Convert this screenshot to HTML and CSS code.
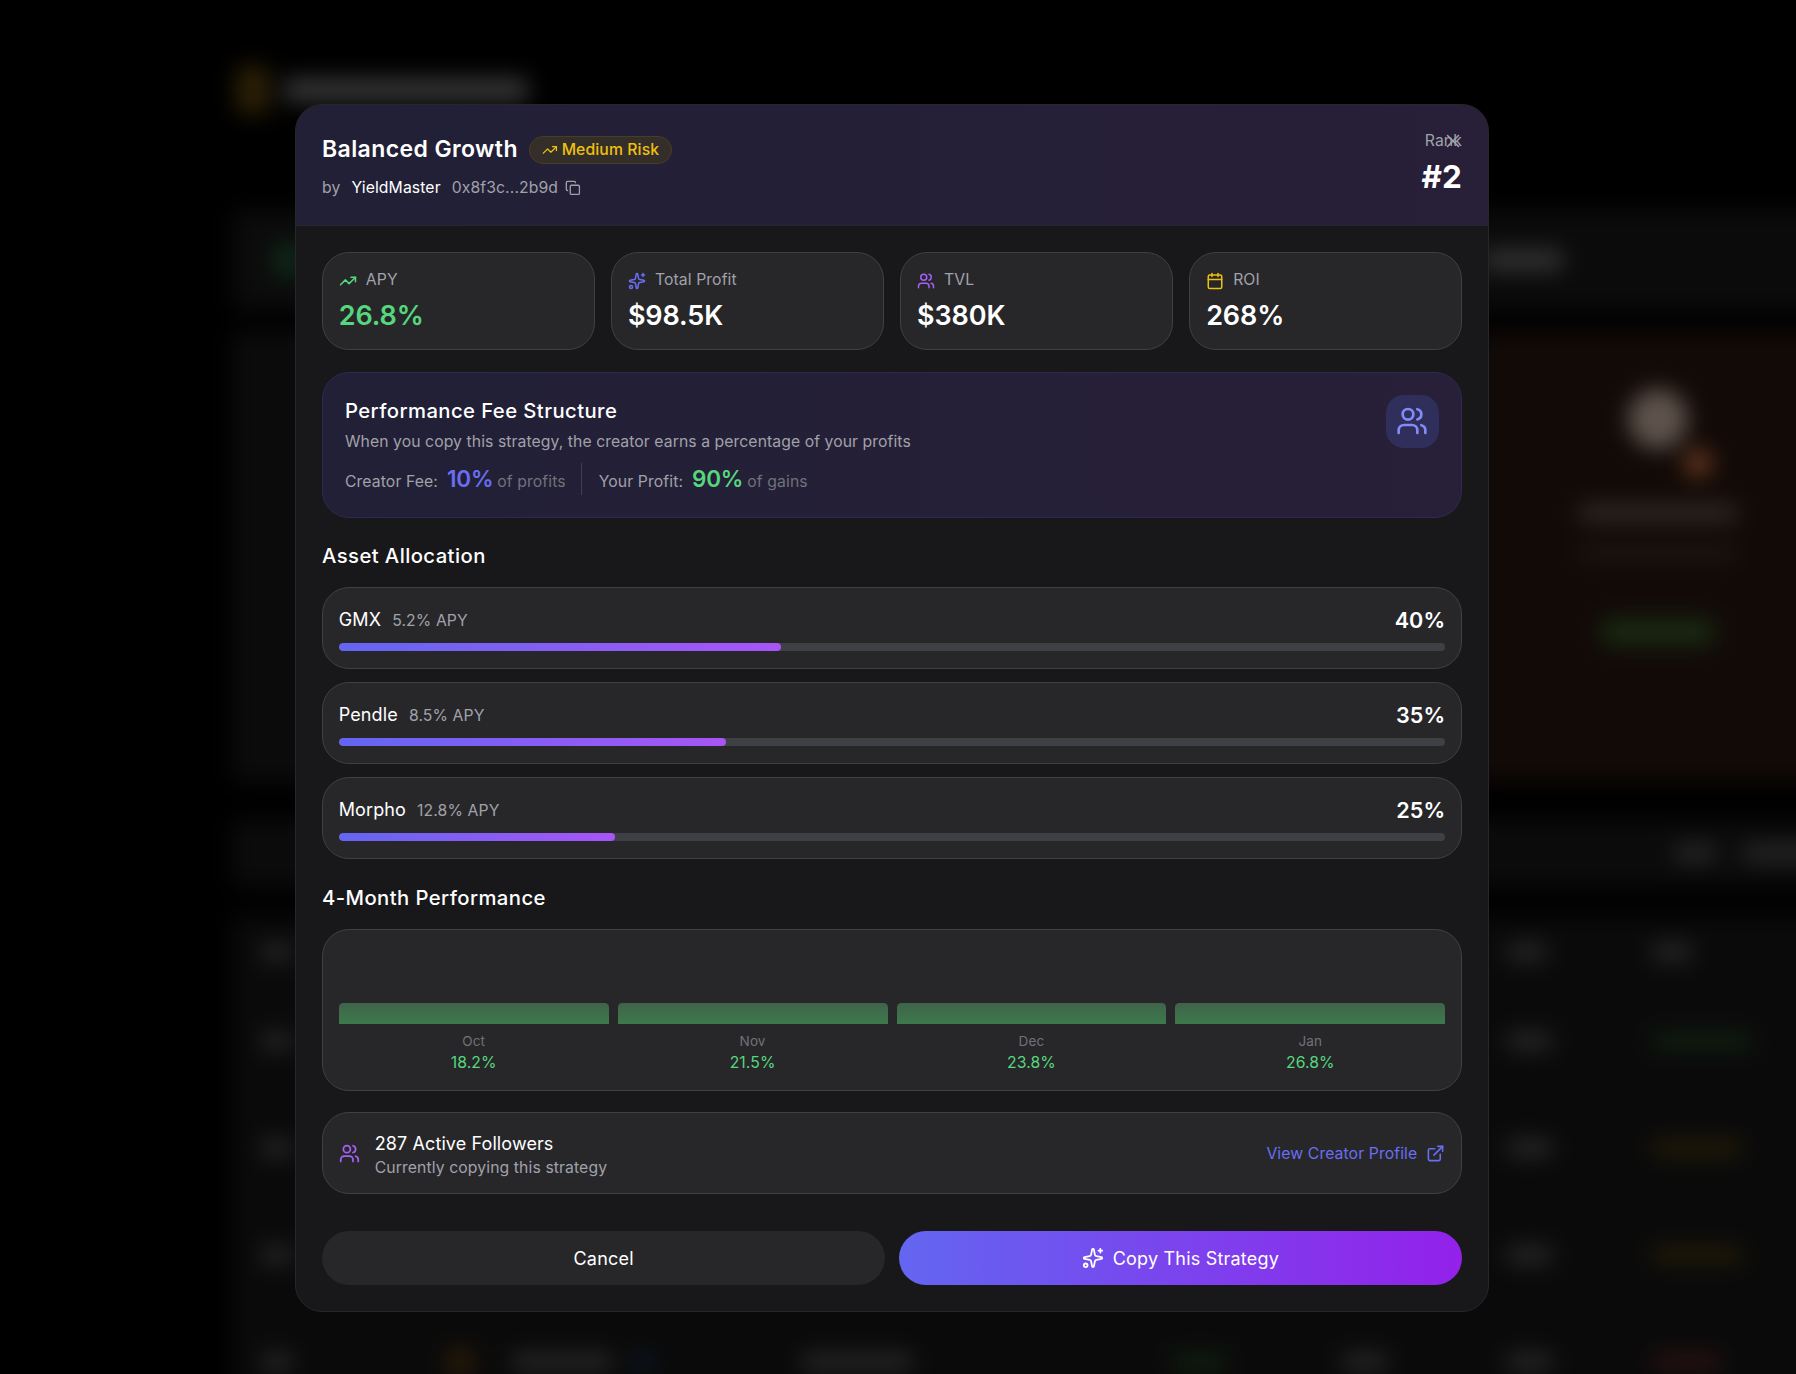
FILE: index.html
```html
<!DOCTYPE html>
<html lang="en">
    <head>
        <meta charset="UTF-8" />
        <meta name="viewport" content="width=device-width, initial-scale=1.0" />
        <title>Balanced Growth</title>
        <link rel="stylesheet" href="styles.css">
    </head>

    <body>
        <!-- icon sprite -->
        <svg class="sprite" aria-hidden="true">
            <symbol id="i-trend" viewBox="0 0 24 24"><path d="M22 7l-8.5 8.5-5-5L2 17"/><path d="M16 7h6v6"/></symbol>
            <symbol id="i-spark" viewBox="0 0 24 24"><path d="M11.017 2.814a1 1 0 0 1 1.966 0l1.051 5.558a2 2 0 0 0 1.594 1.594l5.558 1.051a1 1 0 0 1 0 1.966l-5.558 1.051a2 2 0 0 0-1.594 1.594l-1.051 5.558a1 1 0 0 1-1.966 0l-1.051-5.558a2 2 0 0 0-1.594-1.594l-5.558-1.051a1 1 0 0 1 0-1.966l5.558-1.051a2 2 0 0 0 1.594-1.594z"/><path d="M20 2v4"/><path d="M22 4h-4"/><circle cx="4" cy="20" r="2"/></symbol>
            <symbol id="i-users" viewBox="0 0 24 24"><path d="M16 21v-2a4 4 0 0 0-4-4H6a4 4 0 0 0-4 4v2"/><circle cx="9" cy="7" r="4"/><path d="M22 21v-2a4 4 0 0 0-3-3.87"/><path d="M16 3.13a4 4 0 0 1 0 7.75"/></symbol>
            <symbol id="i-calendar" viewBox="0 0 24 24"><path d="M8 2v4"/><path d="M16 2v4"/><rect x="3" y="4" width="18" height="18" rx="2"/><path d="M3 10h18"/></symbol>
            <symbol id="i-copy" viewBox="0 0 24 24"><rect x="8" y="8" width="14" height="14" rx="2"/><path d="M4 16c-1.1 0-2-.9-2-2V4c0-1.1.9-2 2-2h10c1.1 0 2 .9 2 2"/></symbol>
            <symbol id="i-link" viewBox="0 0 24 24"><path d="M15 3h6v6"/><path d="M10 14 21 3"/><path d="M18 13v6a2 2 0 0 1-2 2H5a2 2 0 0 1-2-2V8a2 2 0 0 1 2-2h6"/></symbol>
            <symbol id="i-x" viewBox="0 0 24 24"><path d="M18 6 6 18"/><path d="m6 6 12 12"/></symbol>
        </svg>

        <!-- page behind the dialog, only ever seen blurred -->
        <div class="backdrop" aria-hidden="true">
            <div class="page">
                <div class="page__head">
                    <span class="page__logo"></span>
                    <span class="blob blob--title"></span>
                </div>
                <div class="page__band">
                    <span class="blob blob--glow"></span>
                    <span class="blob blob--bandtext"></span>
                </div>
                <div class="podium">
                    <div class="podium__card"></div>
                    <div class="podium__card"></div>
                    <div class="podium__card podium__card--third">
                        <span class="podium__avatar"></span>
                        <span class="podium__medal"></span>
                        <span class="blob blob--name"></span>
                        <span class="blob blob--sub"></span>
                        <span class="blob blob--gain"></span>
                    </div>
                </div>
                <div class="filters">
                    <span class="blob blob--w40"></span>
                    <span class="blob blob--w90"></span>
                </div>
                <div class="trow trow--head">
                    <span class="blob blob--w30"></span><i></i><i></i><i></i><i></i><i></i><i></i>
                    <span class="blob blob--w40"></span><span class="blob blob--w40"></span>
                </div>
                <div class="trow">
                    <span class="blob blob--w30"></span><i></i><i></i><i></i><i></i><i></i><i></i>
                    <span class="blob blob--w45"></span><span class="blob blob--green"></span>
                </div>
                <div class="trow">
                    <span class="blob blob--w30"></span><i></i><i></i><i></i><i></i><i></i><i></i>
                    <span class="blob blob--w45"></span><span class="blob blob--yellow"></span>
                </div>
                <div class="trow">
                    <span class="blob blob--w30"></span><i></i><i></i><i></i><i></i><i></i><i></i>
                    <span class="blob blob--w45"></span><span class="blob blob--yellow"></span>
                </div>
                <div class="trow">
                    <span class="blob blob--w30"></span>
                    <span class="blob blob--orange"></span>
                    <span class="blob blob--w100"></span>
                    <span class="blob blob--blue"></span>
                    <span class="blob blob--w110"></span>
                    <span class="blob blob--green-short"></span>
                    <span class="blob blob--w45"></span>
                    <span class="blob blob--w45"></span>
                    <span class="blob blob--red"></span>
                </div>
            </div>
        </div>

        <div class="overlay">
            <div class="modal">
                <button class="modal__close" aria-label="Close"><svg class="icon"><use href="#i-x"/></svg></button>

                <header class="modal__head">
                    <div>
                        <div class="modal__title-row">
                            <h2 class="modal__title">Balanced Growth</h2>
                            <span class="risk"><svg class="icon"><use href="#i-trend"/></svg>Medium Risk</span>
                        </div>
                        <div class="modal__meta">
                            <span>by</span>
                            <span class="modal__creator">YieldMaster</span>
                            <span class="modal__addr">0x8f3c...2b9d</span>
                            <svg class="icon icon--copy"><use href="#i-copy"/></svg>
                        </div>
                    </div>
                    <div class="rank">
                        <div class="rank__label">Rank</div>
                        <div class="rank__value">#2</div>
                    </div>
                </header>

                <div class="modal__body">
                    <div class="stats">
                        <div class="card stat">
                            <div class="stat__label"><svg class="icon green"><use href="#i-trend"/></svg>APY</div>
                            <div class="stat__value green">26.8%</div>
                        </div>
                        <div class="card stat">
                            <div class="stat__label"><svg class="icon indigo"><use href="#i-spark"/></svg>Total Profit</div>
                            <div class="stat__value">$98.5K</div>
                        </div>
                        <div class="card stat">
                            <div class="stat__label"><svg class="icon purple"><use href="#i-users"/></svg>TVL</div>
                            <div class="stat__value">$380K</div>
                        </div>
                        <div class="card stat">
                            <div class="stat__label"><svg class="icon yellow"><use href="#i-calendar"/></svg>ROI</div>
                            <div class="stat__value">268%</div>
                        </div>
                    </div>

                    <div class="fee">
                        <div>
                            <h3 class="fee__title">Performance Fee Structure</h3>
                            <p class="fee__text">When you copy this strategy, the creator earns a percentage of your profits</p>
                            <div class="fee__split">
                                <div class="fee__part">
                                    <span>Creator Fee:</span>
                                    <strong class="indigo">10%</strong>
                                    <span class="fee__muted">of profits</span>
                                </div>
                                <div class="fee__part fee__part--second">
                                    <span>Your Profit:</span>
                                    <strong class="green">90%</strong>
                                    <span class="fee__muted">of gains</span>
                                </div>
                            </div>
                        </div>
                        <div class="fee__icon"><svg class="icon"><use href="#i-users"/></svg></div>
                    </div>

                    <h3 class="section-title">Asset Allocation</h3>
                    <div class="alloc-list">
                        <div class="card alloc">
                            <div class="alloc__row">
                                <div class="alloc__name">GMX <span class="alloc__apy">5.2% APY</span></div>
                                <div class="alloc__pct">40%</div>
                            </div>
                            <div class="track"><div class="track__fill" style="width: 40%"></div></div>
                        </div>
                        <div class="card alloc">
                            <div class="alloc__row">
                                <div class="alloc__name">Pendle <span class="alloc__apy">8.5% APY</span></div>
                                <div class="alloc__pct">35%</div>
                            </div>
                            <div class="track"><div class="track__fill" style="width: 35%"></div></div>
                        </div>
                        <div class="card alloc">
                            <div class="alloc__row">
                                <div class="alloc__name">Morpho <span class="alloc__apy">12.8% APY</span></div>
                                <div class="alloc__pct">25%</div>
                            </div>
                            <div class="track"><div class="track__fill" style="width: 25%"></div></div>
                        </div>
                    </div>

                    <h3 class="section-title section-title--perf">4-Month Performance</h3>
                    <div class="card chart">
                        <div class="chart__col">
                            <div class="chart__plot"><div class="chart__bar"></div></div>
                            <div class="chart__month">Oct</div>
                            <div class="chart__value">18.2%</div>
                        </div>
                        <div class="chart__col">
                            <div class="chart__plot"><div class="chart__bar"></div></div>
                            <div class="chart__month">Nov</div>
                            <div class="chart__value">21.5%</div>
                        </div>
                        <div class="chart__col">
                            <div class="chart__plot"><div class="chart__bar"></div></div>
                            <div class="chart__month">Dec</div>
                            <div class="chart__value">23.8%</div>
                        </div>
                        <div class="chart__col">
                            <div class="chart__plot"><div class="chart__bar"></div></div>
                            <div class="chart__month">Jan</div>
                            <div class="chart__value">26.8%</div>
                        </div>
                    </div>

                    <div class="card followers">
                        <div class="followers__left">
                            <svg class="icon icon--followers purple"><use href="#i-users"/></svg>
                            <div class="followers__text">
                                <div class="followers__count">287 Active Followers</div>
                                <div class="followers__sub">Currently copying this strategy</div>
                            </div>
                        </div>
                        <a class="followers__link" href="#">View Creator Profile <svg class="icon"><use href="#i-link"/></svg></a>
                    </div>

                    <div class="actions">
                        <button class="btn btn--ghost">Cancel</button>
                        <button class="btn btn--primary"><svg class="icon"><use href="#i-spark"/></svg>Copy This Strategy</button>
                    </div>
                </div>
            </div>
        </div>
    </body>
</html>
```

FILE: styles.css
```css
html {
    box-sizing: border-box;
    font-size: 18px;
}

*,
*:before,
*:after {
    box-sizing: inherit;
}

body,
h2,
h3,
p {
    margin: 0;
    padding: 0;
    font-weight: normal;
}

body {
    position: relative;
    height: 1374px;
    overflow: hidden;
    background: #000;
    color: #fff;
    font-family: Inter, "Liberation Sans", sans-serif;
    letter-spacing: 0.1px;
}

button {
    font-family: inherit;
    letter-spacing: inherit;
    border: 0;
    cursor: pointer;
}

.sprite {
    display: none;
}

.icon {
    width: 1rem;
    height: 1rem;
    flex: none;
    fill: none;
    stroke: currentColor;
    stroke-width: 2;
    stroke-linecap: round;
    stroke-linejoin: round;
}

.green {
    color: #56d67d;
}

.indigo {
    color: #6a6ef2;
}

.purple {
    color: #a660f5;
}

.yellow {
    color: #eec010;
}

/* Blurred page behind the dialog */
.backdrop {
    position: absolute;
    inset: 0;
    overflow: hidden;
}

.page {
    width: 1700px;
    margin-left: 232px;
    filter: blur(11px);
}

.page__head {
    display: flex;
    align-items: center;
    gap: 14px;
    height: 210px;
    padding: 0 0 30px 4px;
}

.page__logo {
    width: 34px;
    height: 48px;
    border-radius: 6px;
    background: #2c2006;
}

.page__band {
    display: flex;
    justify-content: space-between;
    align-items: center;
    height: 100px;
    padding: 0 369px 0 30px;
    background: #0b0b0b;
}

.podium {
    display: grid;
    grid-template-columns: 620px 620px 1fr;
    gap: 16px;
    height: 450px;
    margin-top: 22px;
}

.podium__card {
    background: #0b0b0b;
}

.podium__card--third {
    display: flex;
    flex-direction: column;
    align-items: center;
    padding-right: 100px;
    margin-left: -20px;
    background: #120a07;
}

.podium__avatar {
    width: 60px;
    height: 60px;
    margin-top: 57px;
    border-radius: 50%;
    background: #5e534c;
}

.podium__medal {
    width: 28px;
    height: 28px;
    margin: 0 0 0 80px;
    border-radius: 50%;
    background: #663820;
}

.filters {
    display: flex;
    justify-content: flex-end;
    align-items: center;
    gap: 27px;
    height: 66px;
    margin-top: 38px;
    padding-right: 100px;
    background: #0b0b0b;
}

.trow {
    display: grid;
    grid-template-columns: 185px 65px 122px 168px 370px 170px 165px 145px 100px;
    align-items: center;
    justify-items: start;
    height: 107px;
    padding-left: 30px;
    background: #0a0a0a;
}

.trow--head {
    height: 71px;
    margin-top: 30px;
}

.blob {
    display: block;
    height: 16px;
    border-radius: 4px;
    background: #2a2a2a;
}

.blob--title {
    width: 244px;
    height: 24px;
    background: #363636;
}

.blob--glow {
    width: 34px;
    height: 34px;
    margin-left: 10px;
    background: #0f2618;
}

.blob--bandtext {
    width: 80px;
    height: 20px;
    background: #343434;
}

.blob--name {
    width: 158px;
    height: 16px;
    margin-top: 28px;
    background: #332b28;
}

.blob--sub {
    width: 158px;
    height: 12px;
    margin-top: 26px;
    background: #1e1815;
}

.blob--gain {
    width: 112px;
    height: 26px;
    margin-top: 60px;
    background: #182a12;
}

.blob--w30 {
    width: 30px;
}

.blob--w40 {
    width: 40px;
}

.blob--w45 {
    width: 45px;
}

.blob--w90 {
    width: 90px;
}

.blob--w100 {
    width: 100px;
}

.blob--w110 {
    width: 110px;
}

.blob--green {
    width: 100px;
    background: #112011;
}

.blob--green-short {
    width: 55px;
    background: #112011;
}

.blob--yellow {
    width: 90px;
    background: #241c07;
}

.blob--red {
    width: 70px;
    background: #2c1212;
}

.blob--orange {
    width: 26px;
    height: 26px;
    background: #2c1c08;
}

.blob--blue {
    width: 16px;
    height: 16px;
    background: #0e1c34;
}

/* Dialog */
.overlay {
    position: absolute;
    inset: 0;
    display: flex;
    justify-content: center;
    align-items: flex-start;
    padding: 104px 12px 0 0;
}

.modal {
    position: relative;
    width: 1194px;
    border: 1px solid #27272a;
    border-radius: 1.5rem;
    background: #18181b;
    overflow: hidden;
}

.modal__close {
    position: absolute;
    top: 25px;
    right: 24px;
    display: flex;
    padding: 0;
    background: none;
    color: #a1a1aa;
}

.modal__close .icon {
    width: 22px;
    height: 22px;
    stroke-width: 1.7;
}

.modal__head {
    display: flex;
    justify-content: space-between;
    height: 121px;
    padding: 29px 26px 0;
    border-bottom: 1px solid #27272a;
    background: linear-gradient(90deg, #212036, #281f38);
}

.modal__title-row {
    display: flex;
    align-items: center;
    gap: 11px;
}

.modal__title {
    font-size: 23px;
    line-height: 1.75rem;
    font-weight: 600;
    letter-spacing: 0.4px;
}

.risk {
    display: flex;
    align-items: center;
    gap: 4px;
    height: 28px;
    padding: 0 12px;
    border: 1px solid #4c3d20;
    border-radius: 999px;
    background: #342e2b;
    color: #eec010;
    font-size: 0.875rem;
    font-weight: 450;
}

.risk .icon {
    width: 0.875rem;
    height: 0.875rem;
}

.modal__meta {
    display: flex;
    align-items: center;
    gap: 11px;
    margin-top: 11px;
    color: #a1a1aa;
    font-size: 0.875rem;
    line-height: 1.25rem;
}

.modal__creator {
    color: #fff;
    font-weight: 420;
}

.modal__addr {
    margin-right: -4px;
}

.icon--copy {
    width: 0.875rem;
    height: 0.875rem;
}

.rank {
    text-align: right;
}

.rank__label {
    margin-top: -4px;
    color: #a1a1aa;
    font-size: 0.875rem;
    line-height: 1.25rem;
}

.rank__value {
    margin-top: 6px;
    font-size: 1.75rem;
    line-height: 2rem;
    font-weight: 700;
}

.modal__body {
    padding: 25.5px 26px 26px;
}

.card {
    border: 1px solid #3f3f46;
    border-radius: 1.5rem;
    background: #27272a;
}

.stats {
    display: grid;
    grid-template-columns: repeat(4, 1fr);
    gap: 16.5px;
}

.stat {
    height: 98px;
    padding: 0.875rem 1rem 0 0.875rem;
}

.stat__label {
    display: flex;
    align-items: center;
    gap: 0.5rem;
    margin-top: 1px;
    color: #a1a1aa;
    font-size: 0.875rem;
    line-height: 1.25rem;
}

.stat__value {
    margin-top: 6.5px;
    font-size: 1.5rem;
    line-height: 2rem;
    font-weight: 600;
    letter-spacing: -0.1px;
}

.fee {
    display: flex;
    justify-content: space-between;
    height: 146px;
    margin-top: 22.5px;
    padding: 21.5px 1.25rem 0 22px;
    border: 1px solid #2c2a55;
    border-radius: 1.5rem;
    background: linear-gradient(90deg, #212036, #281f38);
}

.fee__title {
    font-size: 1.125rem;
    line-height: 1.75rem;
    font-weight: 550;
    letter-spacing: 0.43px;
}

.fee__text {
    margin-top: 5px;
    color: #a1a1aa;
    font-size: 0.875rem;
    line-height: 1.25rem;
    letter-spacing: 0.07px;
}

.fee__split {
    display: flex;
    margin-top: 9px;
}

.fee__part {
    display: flex;
    align-items: baseline;
    gap: 0.5rem;
    height: 32px;
    padding: 2px 15px 0 0;
    color: #a1a1aa;
    font-size: 0.875rem;
}

.fee__part strong {
    font-size: 1.25rem;
    font-weight: 600;
    letter-spacing: -0.2px;
}

.fee__muted {
    margin-left: -5px;
    color: #71717a;
}

.fee__part--second {
    padding-left: 17px;
    border-left: 1px solid #3f3f46;
}

.fee__icon {
    display: flex;
    justify-content: center;
    align-items: center;
    width: 53px;
    height: 53px;
    border-radius: 1rem;
    background: #302e5b;
    color: #818cf8;
}

.fee__icon .icon {
    width: 32px;
    height: 32px;
}

.section-title {
    margin: 21.5px 0 15.5px;
    font-size: 1.125rem;
    line-height: 1.75rem;
    font-weight: 500;
    letter-spacing: 0.43px;
}

.section-title--perf {
    margin-top: 23px;
}

.alloc-list {
    display: flex;
    flex-direction: column;
    gap: 13px;
}

.alloc {
    height: 82px;
    padding: 0.875rem 0.875rem 0;
}

.alloc__row {
    display: flex;
    justify-content: space-between;
    align-items: center;
    height: 33px;
}

.alloc__name {
    font-size: 1rem;
    font-weight: 430;
}

.alloc__apy {
    margin-left: 6px;
    color: #a1a1aa;
    font-size: 0.875rem;
    font-weight: 400;
}

.alloc__pct {
    font-size: 1.2rem;
    font-weight: 600;
}

.track {
    height: 8px;
    margin-top: 7px;
    border-radius: 999px;
    background: #3f3f46;
    overflow: hidden;
}

.track__fill {
    height: 100%;
    border-radius: 999px;
    background: linear-gradient(90deg, #6366f1, #a855f7);
}

.chart {
    display: grid;
    grid-template-columns: repeat(4, 1fr);
    gap: 0.5rem;
    height: 162px;
    padding: 0.875rem;
}

.chart__col {
    text-align: center;
}

.chart__plot {
    display: flex;
    align-items: flex-end;
    height: 79px;
}

.chart__bar {
    width: 100%;
    height: 21px;
    border-radius: 0.25rem 0.25rem 0 0;
    background: linear-gradient(180deg, #3f644a, #3d794b);
}

.chart__month {
    margin-top: 8px;
    color: #71717a;
    font-size: 0.75rem;
    line-height: 1rem;
}

.chart__value {
    margin-top: 2px;
    color: #56d67d;
    font-size: 0.875rem;
    line-height: 1.25rem;
}

.followers {
    display: flex;
    justify-content: space-between;
    align-items: center;
    height: 82px;
    margin-top: 21.5px;
    padding: 0 0.875rem;
}

.followers__left {
    display: flex;
    align-items: center;
    gap: 15px;
}

.followers__text {
    margin-top: 4px;
}

.icon--followers {
    width: 21px;
    height: 21px;
}

.followers__count {
    font-size: 1rem;
    line-height: 1.45rem;
    font-weight: 430;
}

.followers__sub {
    color: #a1a1aa;
    font-size: 0.875rem;
    line-height: 1.25rem;
}

.followers__link {
    display: flex;
    align-items: center;
    gap: 0.5rem;
    color: #6a6ef2;
    font-size: 0.875rem;
    text-decoration: none;
}

.followers__link .icon {
    width: 19px;
    height: 19px;
}

.actions {
    display: grid;
    grid-template-columns: 1fr 1fr;
    gap: 0.75rem;
    margin-top: 37px;
}

.btn {
    display: flex;
    justify-content: center;
    align-items: center;
    gap: 0.5rem;
    height: 54px;
    border-radius: 999px;
    color: #fff;
    font-size: 1rem;
    font-weight: 430;
    letter-spacing: 0.2px;
}

.btn .icon {
    width: 22px;
    height: 22px;
}

.btn--ghost {
    background: #27272a;
}

.btn--primary {
    background: linear-gradient(90deg, #6366f1, #9321ea);
}
```
